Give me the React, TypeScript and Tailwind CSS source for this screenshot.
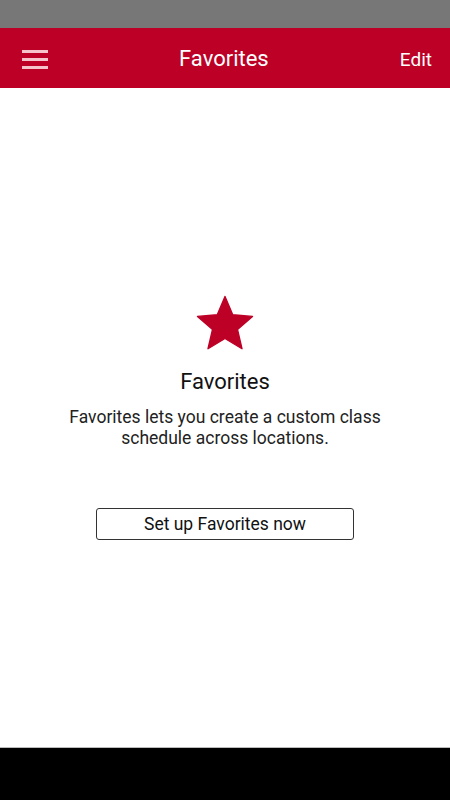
import React from 'react'

const font = { fontFamily: 'Roboto, "Liberation Sans", sans-serif' }

function StarIcon() {
  return (
    <svg width="66" height="66" viewBox="0 0 24 24" className="block">
      <path
        d="M12 17.27L18.18 21l-1.64-7.03L22 9.24l-7.19-.61L12 2 9.19 8.63 2 9.24l5.46 4.73L5.82 21z"
        fill="#bd0026"
        stroke="#bd0026"
        strokeWidth="0.5"
        strokeLinejoin="round"
      />
    </svg>
  )
}

export default function App() {
  return (
    <div className="w-[450px] h-[800px] flex flex-col bg-white overflow-hidden" style={font}>
      {/* status bar */}
      <div className="h-[28px] bg-[#777777] shrink-0" />

      {/* app bar */}
      <div className="h-[60px] bg-[#bd0026] shrink-0 flex items-center justify-between px-[22px] pt-[2px]">
        <div className="flex flex-col gap-[5px] w-[26px]">
          <span className="h-[3px] bg-[#f6c3cb] block" />
          <span className="h-[3px] bg-[#f6c3cb] block" />
          <span className="h-[3px] bg-[#f6c3cb] block" />
        </div>
        <div className="text-white text-[22px] leading-none">Favorites</div>
        <div className="text-white text-[19px] leading-none mr-[-4px]">Edit</div>
      </div>

      {/* content */}
      <div className="flex-1 flex flex-col items-center">
        <div className="mt-[203px]">
          <StarIcon />
        </div>
        <div className="mt-[12px] text-[22px] leading-[26px] text-[#111]">Favorites</div>
        <div className="mt-[12px] text-[17.5px] leading-[21px] text-[#222] text-center">
          Favorites lets you create a custom class
          <br />
          schedule across locations.
        </div>
        <button className="mt-[59px] w-[258px] h-[32px] border border-[#333] rounded-[3px] text-[17.5px] text-[#111] bg-white">
          Set up Favorites now
        </button>
      </div>

      {/* nav bar */}
      <div className="h-[1px] bg-[#bbbbbb] shrink-0" />
      <div className="h-[52px] bg-black shrink-0" />
    </div>
  )
}
